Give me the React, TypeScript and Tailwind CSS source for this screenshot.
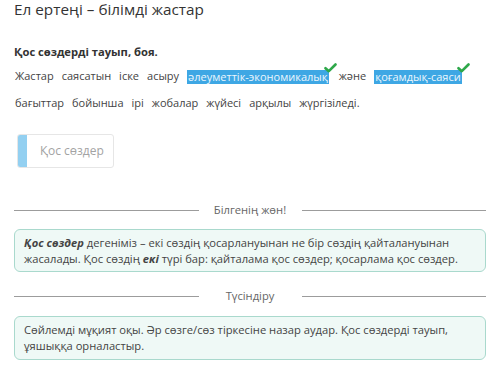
import { FunctionComponent } from "react";

const Check: FunctionComponent = () => (
  <svg
    className="absolute -top-[7px] -right-[8px] w-[13px] h-[10px]"
    viewBox="0 0 13 10"
    fill="none"
  >
    <path
      d="M1.5 5.2 L4.8 8.2 L11.5 1.5"
      stroke="#2ea84a"
      strokeWidth="2.6"
      strokeLinecap="round"
      strokeLinejoin="round"
    />
  </svg>
);

const Marked: FunctionComponent<{ text: string }> = ({ text }) => (
  <span className="relative whitespace-nowrap bg-[#3ea7e4] text-[#eaf6fd] leading-[14px] px-[1px]">
    {text}
    <Check />
  </span>
);

const Divider: FunctionComponent<{ label: string }> = ({ label }) => (
  <div className="flex items-center h-[18px]">
    <div className="flex-1 h-px bg-[#9c9c9c]" />
    <div className="w-[103px] text-center text-[11.2px] text-[#666]">{label}</div>
    <div className="flex-1 h-px bg-[#9c9c9c]" />
  </div>
);

const App: FunctionComponent = () => {
  const line1 = ["Жастар", "саясатын", "іске", "асыру"];
  const line2 = ["бағыттар", "бойынша", "ірі", "жобалар", "жүйесі", "арқылы", "жүргізіледі."];
  return (
    <div className="w-[500px] h-[369px] overflow-hidden bg-white px-[14px] font-['Open_Sans',sans-serif] text-[#444]">
      <div className="-mt-[2px] text-[15.3px] leading-[22px] text-[#333]">
        Ел ертеңі – білімді жастар
      </div>
      <div className="mt-[23px] text-[11.2px] leading-[18px] font-bold text-[#333]">
        Қос сөздерді тауып, боя.
      </div>
      <div className="mt-[2px] text-[11px] text-[#444]">
        <div className="flex items-center h-[27px] gap-[8px] pl-[1px] whitespace-nowrap">
          {line1.map((w) => (
            <span key={w}>{w}</span>
          ))}
          <Marked text="әлеуметтік-экономикалық" />
          <span className="ml-[2px]">және</span>
          <Marked text="қоғамдық-саяси" />
        </div>
        <div className="flex items-center h-[27px] gap-[8px] pl-[1px] whitespace-nowrap">
          {line2.map((w) => (
            <span key={w}>{w}</span>
          ))}
        </div>
      </div>
      <div className="mt-[17px] ml-[3px] flex w-[97px] h-[34px] rounded-[3px] border border-[#e6e6e6] overflow-hidden">
        <div className="w-[9px] bg-[#93d0f1]" />
        <div className="flex items-center pl-[13px] text-[12px] whitespace-nowrap text-[#a3a3a3]">Қос сөздер</div>
      </div>
      <div className="mt-[33px]">
        <Divider label="Білгенің жөн!" />
      </div>
      <div className="mt-[10px] rounded-[6px] border border-[#a9d9cd] bg-[#eff9f6] px-[9px] pt-[5px] pb-[4px] text-[11.2px] leading-[16px] text-[#444]">
        <b className="italic">Қос сөздер</b> дегеніміз – екі сөздің қосарлануынан не бір сөздің қайталануынан жасалады. Қос сөздің{" "}
        <b className="italic">екі</b> түрі бар: қайталама қос сөздер; қосарлама қос сөздер.
      </div>
      <div className="mt-[15px]">
        <Divider label="Түсіндіру" />
      </div>
      <div className="mt-[11px] rounded-[6px] border border-[#a9d9cd] bg-[#eff9f6] px-[9px] pt-[5px] pb-[5px] text-[11.2px] leading-[16px] text-[#444]">
        Сөйлемді мұқият оқы. Әр сөзге/сөз тіркесіне назар аудар. Қос сөздерді тауып, ұяшыққа орналастыр.
      </div>
    </div>
  );
};

export default App;
